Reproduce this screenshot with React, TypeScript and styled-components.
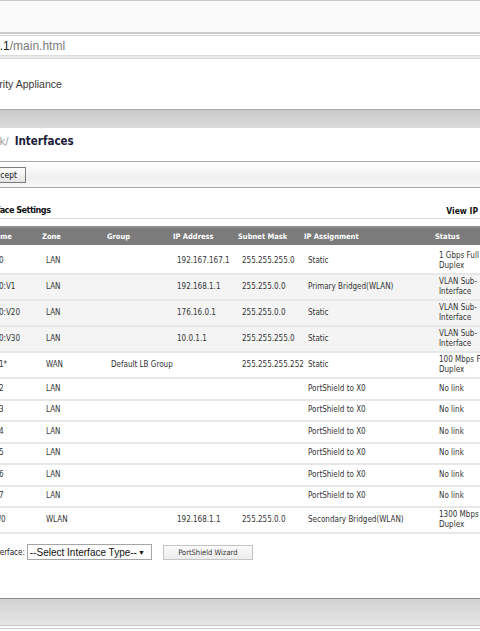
import React from "react";
import styled, { createGlobalStyle } from "styled-components";

const TAHOMA = `"DejaVu Sans Condensed", "DejaVu Sans", Tahoma, sans-serif`;
const ARIAL = `"Liberation Sans", Arial, sans-serif`;

const Global = createGlobalStyle`
  html, body {
    margin: 0;
    padding: 0;
    background: #ffffff;
    overflow: hidden;
  }
  body {
    width: 480px;
    height: 631px;
  }
`;

const Viewport = styled.div`
  width: 480px;
  height: 631px;
  overflow: hidden;
`;

/* the page is wider than the window: it is seen with its left 100px scrolled away */
const Page = styled.div`
  width: 640px;
  margin-left: -100px;
  display: flex;
  flex-direction: column;
`;

const BrowserToolbar = styled.div`
  height: 31px;
  background: #f9f9f9;
  border-top: 1px solid #c8c8c8;
  border-bottom: 2px solid #cbcbcb;
`;

const AddressBar = styled.div`
  height: 19px;
  margin-top: 1px;
  border-top: 1px solid #d2d2d2;
  border-bottom: 1px solid #dcdcdc;
  display: flex;
  align-items: center;
  padding-left: 33px;
  font-family: ${ARIAL};
  font-size: 12px;
  background: #fff;
`;

const Host = styled.span`
  color: #202020;
`;

const Path = styled.span`
  color: #7a7a7a;
`;

const AddressShadow = styled.div`
  height: 2px;
  background: #ececec;
  border-bottom: 1px solid #dadada;
`;

const AppHeader = styled.div`
  height: 50px;
  display: flex;
  align-items: center;
  padding-left: 34px;
  font-family: ${ARIAL};
  font-size: 10.5px;
  color: #3a3a3a;
  background: #fff;
`;

const NavBar = styled.div`
  height: 18px;
  border-top: 1px solid #a9a9a9;
  background: linear-gradient(#c9c9c9, #dcdcdc);
`;

const TitleBar = styled.div`
  height: 33px;
  box-sizing: border-box;
  display: flex;
  align-items: baseline;
  gap: 6px;
  padding: 6px 0 0 64px;
  font-family: ${TAHOMA};
  background: #fff;
`;

const Crumb = styled.span`
  font-size: 11px;
  color: #9a9a9a;
`;

const Title = styled.h1`
  margin: 0;
  font-size: 11.5px;
  font-weight: bold;
  color: #1c1c3c;
`;

const ActionBar = styled.div`
  height: 25px;
  border-top: 1px solid #a6a6a6;
  border-bottom: 1px solid #a6a6a6;
  background: linear-gradient(#ffffff, #efefef 60%, #f7f7f7);
  display: flex;
  align-items: center;
  padding-left: 82px;
`;

const Button = styled.button`
  height: 16px;
  margin-top: 1px;
  padding: 0 8px;
  border: 1px solid #7c7c7c;
  border-radius: 0;
  background: linear-gradient(#ffffff, #e4e4e4);
  font-family: ${TAHOMA};
  font-size: 8.5px;
  color: #111;
  line-height: 14px;
`;

const SectionHead = styled.div`
  height: 31px;
  display: flex;
  align-items: flex-end;
  padding: 0 27px 3px 77px;
  box-sizing: border-box;
  border-bottom: 1px solid #d3dbe3;
  font-family: ${TAHOMA};
  font-weight: bold;
  color: #111;
`;

const SectionTitle = styled.h2`
  margin: 0;
  font-size: 9px;
  letter-spacing: -0.5px;
  font-weight: bold;
`;

const ViewSwitch = styled.span`
  margin-left: auto;
  font-size: 8.5px;
  margin-bottom: -1px;
`;

const Table = styled.div`
  margin: 7px 0 0 88px;
  font-family: ${TAHOMA};
`;

const COLS = "52px 65px 66px 65px 66px 131px 1fr";

const HeadRow = styled.div`
  display: grid;
  grid-template-columns: ${COLS};
  height: 17px;
  align-items: center;
  border-top: 2px solid #8d8d8d;
  background: #7b7b7b;
  margin-bottom: 4px;
`;

const HeadCell = styled.div`
  padding-left: 2px;
  font-size: 7.5px;
  font-weight: bold;
  color: #ffffff;
  white-space: nowrap;
`;

const Row = styled.div<{ $shade?: boolean }>`
  display: grid;
  grid-template-columns: ${COLS};
  min-height: 19.5px;
  align-items: center;
  background: ${(p) => (p.$shade ? "#f4f4f4" : "#ffffff")};
  border-bottom: 2px solid #e8e8e8;
`;

const Cell = styled.div`
  padding: 2px 0 2px 6px;
  font-size: 8px;
  line-height: 10px;
  color: #333;
  white-space: nowrap;
`;

const StatusCell = styled(Cell)`
  white-space: normal;
  max-width: 62px;
`;

const AddRow = styled.div`
  display: flex;
  align-items: center;
  padding: 10px 0 38px 74px;
  font-family: ${TAHOMA};
`;

const AddLabel = styled.label`
  font-size: 8px;
  color: #222;
`;

const FakeSelect = styled.div`
  width: 125px;
  height: 16px;
  box-sizing: border-box;
  margin-left: 2px;
  border: 1px solid #a5a5a5;
  background: #fff;
  display: flex;
  align-items: center;
  justify-content: space-between;
  padding: 0 6px 0 2px;
  font-family: ${ARIAL};
  font-size: 10px;
  color: #111;
`;

const Arrow = styled.span`
  font-size: 7px;
`;

const WizardButton = styled.button`
  width: 90px;
  height: 15px;
  margin-left: 11px;
  border: 1px solid #c4c4c4;
  border-radius: 0;
  background: linear-gradient(#fafafa, #ececec);
  font-family: ${TAHOMA};
  font-size: 7.5px;
  color: #333;
  padding: 0;
`;

const FooterBar = styled.div`
  height: 26px;
  border-top: 1px solid #8a8a8a;
  border-bottom: 1px solid #c4c4c4;
  background: linear-gradient(#d2d2d2, #e6e6e6);
`;

const FooterRule = styled.div`
  margin-top: 2px;
  height: 1px;
  background: #cfcfcf;
`;

type Iface = {
  name: string;
  zone: string;
  group?: string;
  ip?: string;
  mask?: string;
  assign: string;
  status: string;
  shade?: boolean;
};

const ifaces: Iface[] = [
  { name: "X0", zone: "LAN", ip: "192.167.167.1", mask: "255.255.255.0", assign: "Static", status: "1 Gbps Full Duplex" },
  { name: "X0:V1", zone: "LAN", ip: "192.168.1.1", mask: "255.255.0.0", assign: "Primary Bridged(WLAN)", status: "VLAN Sub-Interface", shade: true },
  { name: "X0:V20", zone: "LAN", ip: "176.16.0.1", mask: "255.255.0.0", assign: "Static", status: "VLAN Sub-Interface", shade: true },
  { name: "X0:V30", zone: "LAN", ip: "10.0.1.1", mask: "255.255.255.0", assign: "Static", status: "VLAN Sub-Interface", shade: true },
  { name: "X1*", zone: "WAN", group: "Default LB Group", mask: "255.255.255.252", assign: "Static", status: "100 Mbps Full Duplex" },
  { name: "X2", zone: "LAN", assign: "PortShield to X0", status: "No link" },
  { name: "X3", zone: "LAN", assign: "PortShield to X0", status: "No link" },
  { name: "X4", zone: "LAN", assign: "PortShield to X0", status: "No link" },
  { name: "X5", zone: "LAN", assign: "PortShield to X0", status: "No link" },
  { name: "X6", zone: "LAN", assign: "PortShield to X0", status: "No link" },
  { name: "X7", zone: "LAN", assign: "PortShield to X0", status: "No link" },
  { name: "W0", zone: "WLAN", ip: "192.168.1.1", mask: "255.255.0.0", assign: "Secondary Bridged(WLAN)", status: "1300 Mbps Full Duplex" },
];

const headers = ["Name", "Zone", "Group", "IP Address", "Subnet Mask", "IP Assignment", "Status"];

export default function App() {
  return (
    <>
      <Global />
      <Viewport>
        <Page>
          <BrowserToolbar />
          <AddressBar>
            <Host>192.167.167.1</Host>
            <Path>/main.html</Path>
          </AddressBar>
          <AddressShadow />
          <AppHeader>Network Security Appliance</AppHeader>
          <NavBar />
          <TitleBar>
            <Crumb>Network/</Crumb>
            <Title>Interfaces</Title>
          </TitleBar>
          <ActionBar>
            <Button>Accept</Button>
          </ActionBar>
          <SectionHead>
            <SectionTitle>Interface Settings</SectionTitle>
            <ViewSwitch>View IP Version</ViewSwitch>
          </SectionHead>
          <Table>
            <HeadRow>
              {headers.map((h) => (
                <HeadCell key={h}>{h}</HeadCell>
              ))}
            </HeadRow>
            {ifaces.map((r) => (
              <Row key={r.name} $shade={r.shade}>
                <Cell>{r.name}</Cell>
                <Cell>{r.zone}</Cell>
                <Cell>{r.group ?? ""}</Cell>
                <Cell>{r.ip ?? ""}</Cell>
                <Cell>{r.mask ?? ""}</Cell>
                <Cell>{r.assign}</Cell>
                <StatusCell>{r.status}</StatusCell>
              </Row>
            ))}
          </Table>
          <AddRow>
            <AddLabel>Add Interface:</AddLabel>
            <FakeSelect>
              <span>--Select Interface Type--</span>
              <Arrow>▼</Arrow>
            </FakeSelect>
            <WizardButton>PortShield Wizard</WizardButton>
          </AddRow>
          <FooterBar />
          <FooterRule />
        </Page>
      </Viewport>
    </>
  );
}
